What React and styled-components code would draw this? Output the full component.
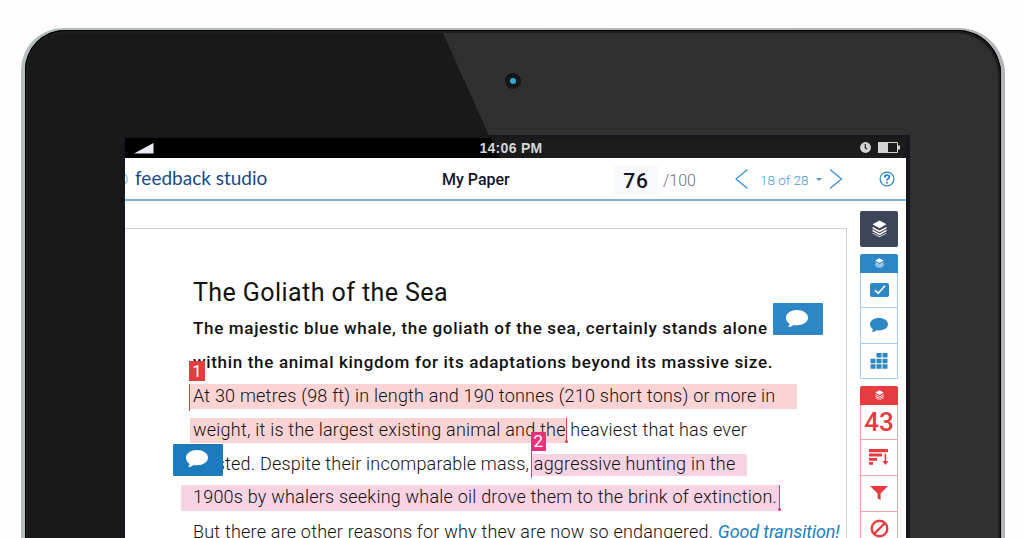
import React from 'react';
import styled, { createGlobalStyle, ThemeProvider } from 'styled-components';

const theme = {
  colors: {
    blue: '#2d87c5',
    sky: '#4a9bd6',
    line: '#7ab2db',
    red: '#e63c3f',
    pink: '#ec2f7b',
    navy: '#14142b',
    slate: '#3d4558',
    roseMark: '#fad4d4',
    pinkMark: '#f8d3e4',
  },
  fonts: {
    body: "Roboto, 'Liberation Sans', sans-serif",
    brand: "Lato, 'Open Sans', sans-serif",
    status: "'Liberation Sans', Arial, sans-serif",
  },
};

const GlobalStyle = createGlobalStyle`
  * {
    box-sizing: border-box;
  }

  body {
    margin: 0;
    background: #fff;
    overflow: hidden;
  }
`;

const Page = styled.div`
  height: 538px;
  padding: 28px 19px 0 21px;
  overflow: hidden;
  background: #fefefe;
  font-family: ${({ theme }) => theme.fonts.body};
`;

const Shell = styled.div`
  height: 620px;
  padding: 2px 4px 0 4px;
  border-radius: 42px 46px 0 0;
  background: linear-gradient(90deg, #b4bcbd 0%, #b4b8b9 60%, #b5b2b8 100%);
`;

const Bezel = styled.div`
  position: relative;
  height: 100%;
  padding: 105px 91px 0 96px;
  border-radius: 40px 44px 0 0;
  background: #191919;
  box-shadow: inset 0 0 0 1px #000, inset 0 0 0 3px #1d1f1e;
  overflow: hidden;
`;

const Glare = styled.div`
  position: absolute;
  inset: 3px 3px 0 3px;
  border-radius: 38px 42px 0 0;
  background: #303030;
  clip-path: polygon(415px 0, 100% 0, 100% 100%, 690px 100%);
`;

const Camera = styled.div`
  position: absolute;
  top: 43px;
  left: 480px;
  width: 16px;
  height: 16px;
  border: 5px solid #161616;
  border-radius: 50%;
  background: #2ba9cf;
`;

const Screen = styled.div`
  position: relative;
  height: 480px;
  border: solid #17171d;
  border-width: 3px 4px 0 4px;
  background: #fff;
`;

const StatusBar = styled.div`
  display: grid;
  grid-template-columns: 1fr auto 1fr;
  align-items: center;
  height: 20px;
  padding: 0 6px 1px 9px;
  background: linear-gradient(66deg, #000 0, #000 47.4%, #1b1b1b 47.5%);
  color: #d6d6d6;
  font: bold 14px ${({ theme }) => theme.fonts.status};
`;

const Clock = styled.span`
  letter-spacing: 0.3px;
  padding-right: 12px;
`;

const StatusIcons = styled.div`
  display: flex;
  align-items: center;
  justify-content: flex-end;
  gap: 7px;
`;

const Header = styled.header`
  display: grid;
  grid-template-columns: 10px 307px 172px 44px 77px 25px 69px 14px 36px 16px;
  align-items: center;
  height: 43px;
  border-bottom: 2px solid ${({ theme }) => theme.colors.line};
  white-space: nowrap;
`;

const Brand = styled.span`
  padding-bottom: 2px;
  color: #17498a;
  font-family: ${({ theme }) => theme.fonts.brand};
  font-size: 19px;
`;

const PaperTitle = styled.h1`
  margin: 2px 0 0;
  color: ${({ theme }) => theme.colors.navy};
  font-size: 16px;
  font-weight: 500;
`;

const Score = styled.span`
  height: 30px;
  margin-top: 2px;
  border-radius: 2px;
  background: #f8f9fa;
  color: ${({ theme }) => theme.colors.navy};
  font-size: 21px;
  font-weight: 500;
  letter-spacing: 0.8px;
  line-height: 32px;
  text-align: center;
`;

const ScoreTotal = styled.span`
  padding: 4px 0 0 5px;
  color: #6c6f7a;
  font-size: 16px;
  font-weight: 300;
`;

const PageCount = styled.span`
  display: flex;
  align-items: center;
  gap: 7px;
  padding-top: 2px;
  color: ${({ theme }) => theme.colors.sky};
  font-size: 13.5px;
  font-weight: 300;
`;

const Caret = styled.i`
  border: 3px solid transparent;
  border-top: 3px solid ${({ theme }) => theme.colors.sky};
  border-bottom: 0;
`;

const Workspace = styled.div`
  display: flex;
  align-items: flex-start;
`;

const Document = styled.article`
  flex: none;
  width: 722px;
  height: 400px;
  margin-top: 27px;
  padding: 45px 0 0 68px;
  border: solid #cfcfcf;
  border-width: 1px 1px 0 0;
`;

const Heading = styled.h2`
  margin: 0;
  color: #111;
  font-size: 25px;
  font-weight: 400;
  line-height: 37px;
  letter-spacing: 0.43px;
`;

const Line = styled.div`
  position: relative;
  display: flex;
  align-items: center;
  height: 33.9px;
  color: #111;
  font-size: ${({ $bold }) => ($bold ? '17px' : '18px')};
  font-weight: ${({ $bold }) => ($bold ? 500 : 300)};
  letter-spacing: ${({ $spacing }) => $spacing}px;
  white-space: pre;
`;

/* the tint hangs one pixel below the text's own centre */
const Mark = styled.mark`
  position: relative;
  height: ${({ $height }) => $height}px;
  margin: 2px ${({ $right }) => -$right}px 0 ${({ $left }) => -$left}px;
  padding: 0 ${({ $right }) => $right}px 0 ${({ $left }) => $left}px;
  background: ${({ theme, $tone }) => theme.colors[$tone]};
  color: inherit;
  line-height: ${({ $height }) => $height - 2}px;
`;

const StartPin = styled.span`
  position: absolute;
  bottom: -2px;
  left: -1px;
  width: 1px;
  height: 27px;
  background: ${({ theme, $tone }) => theme.colors[$tone]};
`;

const EndPin = styled.span`
  position: absolute;
  top: 0;
  right: 0;
  bottom: 0;
  width: 1px;
  background: ${({ theme, $tone }) => theme.colors[$tone]};

  &::after {
    content: '';
    position: absolute;
    bottom: 0;
    left: -1px;
    width: 3px;
    height: 3px;
    border-radius: 50%;
    background: inherit;
  }
`;

const Flag = styled.span`
  position: absolute;
  z-index: 1;
  bottom: calc(100% + ${({ $lift }) => $lift}px);
  left: -1px;
  width: ${({ $width }) => $width}px;
  height: ${({ $height }) => $height}px;
  background: ${({ theme, $tone }) => theme.colors[$tone]};
  color: #fff;
  font-size: 17px;
  font-weight: 400;
  letter-spacing: 0;
  line-height: ${({ $height }) => $height}px;
  text-align: center;
`;

const CommentBubble = styled.span`
  position: absolute;
  z-index: 1;
  top: ${({ $top }) => $top}px;
  left: ${({ $left }) => $left}px;
  display: flex;
  align-items: center;
  justify-content: center;
  width: 50px;
  height: 32px;
  padding: 0 2px 1px 0;
  border-radius: 1px;
  background: ${({ $color }) => $color};
`;

const Remark = styled.em`
  color: #1b7fc0;
  font-weight: 400;
  letter-spacing: ${({ $spacing }) => $spacing}px;
`;

const Toolbar = styled.aside`
  display: flex;
  flex: none;
  flex-direction: column;
  gap: 6.5px;
  width: 38px;
  margin: 10px 0 0 13px;
`;

const LayersButton = styled.button`
  display: flex;
  align-items: center;
  justify-content: center;
  height: 36px;
  padding: 0;
  border: 0;
  border-radius: 2px;
  background: ${({ theme }) => theme.colors.slate};
`;

const ToolGroup = styled.div`
  display: flex;
  flex-direction: column;
  border-radius: 2px;
  overflow: hidden;
`;

const GroupHeader = styled.div`
  display: flex;
  align-items: center;
  justify-content: center;
  height: 19px;
  background: ${({ theme, $tone }) => theme.colors[$tone]};
`;

const Tool = styled.div`
  display: flex;
  align-items: center;
  justify-content: center;
  height: 35.6px;
  border: 1px solid ${({ $border }) => $border};
  border-top: 0;
  color: ${({ theme, $tone }) => theme.colors[$tone]};
  font-size: 26px;
  font-weight: 500;
`;

const LayersIcon = ({ size }) => (
  <svg width={size} height={size * 1.15} viewBox="0 0 14 16" fill="none" stroke="#fff" strokeWidth="1.4">
    <path d="M7 .5 13.5 4 7 7.6.5 4Z" fill="#fff" stroke="none" />
    <path d="M.5 7 7 10.6 13.5 7M.5 9.7 7 13.3 13.5 9.7" />
    <path d="M.5 12.2 7 15.6 13.5 12.2" strokeWidth="1" opacity=".75" />
  </svg>
);

const Bubble = ({ width, fill }) => (
  <svg width={width} height={width * 0.78} viewBox="0 0 22 17" fill={fill}>
    <path d="M11 0C17 0 22 3.3 22 7.6s-5 7.5-11 7.5c-1.1 0-2.2-.1-3.2-.3C6.3 16 4.2 16.8 2 17c.9-.9 1.5-2 1.6-3.3C1.4 12.3 0 10 0 7.6 0 3.3 5 0 11 0Z" />
  </svg>
);

const Arrow = ({ flip }) => (
  <svg width="14" height="20" viewBox="0 0 14 20" fill="none" stroke="#2f8fd3" strokeWidth="1.2">
    <path d={flip ? 'M1 .5 12.5 10 1 19.5' : 'M12.5 .5 1 10 12.5 19.5'} />
  </svg>
);

const SignalIcon = () => (
  <svg width="20" height="12" viewBox="0 0 20 12">
    <path d="M0 11.5 19.5 1V11.5Z" fill="#e9edf3" />
  </svg>
);

const AlarmIcon = () => (
  <svg width="11" height="11" viewBox="0 0 11 11">
    <circle cx="5.5" cy="5.5" r="5.4" fill="#d4d4d4" />
    <path d="M5.3 2v3.7l1.7 1.5" fill="none" stroke="#1b1b1b" strokeWidth="1.2" />
  </svg>
);

const BatteryIcon = () => (
  <svg width="22" height="11" viewBox="0 0 22 11">
    <path d="M.5.5h19v10H.5Z" fill="none" stroke="#d4d4d4" />
    <path d="M0 0h10v11H0ZM20 3.5h2v4h-2Z" fill="#d4d4d4" />
  </svg>
);

const HelpIcon = () => (
  <svg width="16" height="16" viewBox="0 0 16 16" fill="none" stroke="#2385cf">
    <circle cx="8" cy="8" r="6.9" strokeWidth="1.2" />
    <path d="M5.7 6.5c0-1.5 1-2.4 2.3-2.4s2.3.8 2.3 2c0 1.6-2.3 1.7-2.3 3.4M8 10.7v1.7" strokeWidth="1.7" />
  </svg>
);

const CheckIcon = () => (
  <svg width="19" height="14" viewBox="0 0 19 14">
    <rect width="19" height="14" rx="2" fill="#2d87c5" />
    <path d="M5 7.2 8.2 10.3 15 2.8" fill="none" stroke="#fff" strokeWidth="1.6" />
  </svg>
);

const GridIcon = () => (
  <svg width="18" height="16" viewBox="0 0 18 16" fill="#2d87c5">
    <path d="M6.5 0h5v4.5h-5ZM12.5 0h5v4.5h-5ZM.5 5.7h5v4.5h-5ZM6.5 5.7h5v4.5h-5ZM12.5 5.7h5v4.5h-5ZM.5 11.3h5v4.5h-5ZM6.5 11.3h5v4.5h-5ZM12.5 11.3h5v4.5h-5Z" />
  </svg>
);

const SortIcon = () => (
  <svg width="20" height="17" viewBox="0 0 20 17" fill="#e63c3f">
    <path d="M0 0h19v3.2H0ZM0 4.5h13v3H0ZM0 9h8v2.7H0ZM0 13h4v2.7H0Z" />
    <path d="M15.6 4.5h1.5v7.5h2.3l-3 4-3-4h2.2Z" />
  </svg>
);

const FilterIcon = () => (
  <svg width="18" height="14" viewBox="0 0 18 14" fill="#e63c3f">
    <path d="M0 0h18L10.6 7.5V14L7.6 12.6V7.5Z" />
  </svg>
);

const BlockIcon = () => (
  <svg width="19" height="19" viewBox="0 0 19 19" fill="none" stroke="#e63c3f" strokeWidth="2.4">
    <circle cx="9.5" cy="9.5" r="7.8" />
    <path d="M4 15 15 4" />
  </svg>
);

const LogoEdge = () => (
  <svg width="4" height="12" viewBox="0 0 4 12" fill="none" stroke="#7fc0e6" strokeWidth="1.3">
    <path d="M0 1.5C3 3 3 8 0 10.5" />
  </svg>
);

const blueTools = [
  { id: 'check', icon: <CheckIcon /> },
  { id: 'comment', icon: <Bubble width={18} fill="#2d87c5" /> },
  { id: 'rubric', icon: <GridIcon /> },
];

const redTools = [
  { id: 'similarity', icon: '43' },
  { id: 'sort', icon: <SortIcon /> },
  { id: 'filter', icon: <FilterIcon /> },
  { id: 'exclude', icon: <BlockIcon /> },
];

const Paper = () => (
  <Document>
    <Heading>The Goliath of the Sea</Heading>
    <Line $bold $spacing={0.67}>
      The majestic blue whale, the goliath of the sea, certainly stands alone
      <CommentBubble $top={-8} $left={580} $color="#2d87c5">
        <Bubble width={22} fill="#fff" />
      </CommentBubble>
    </Line>
    <Line $bold $spacing={0.67}>within the animal kingdom for its adaptations beyond its massive size.</Line>
    <Line $spacing={0.215}>
      <Mark $tone="roseMark" $height={25} $left={3} $right={22}>
        At 30 metres (98 ft) in length and 190 tonnes (210 short tons) or more in
        <StartPin $tone="red" />
        <Flag $tone="red" $lift={3} $width={16} $height={20}>1</Flag>
      </Mark>
    </Line>
    <Line $spacing={0.225}>
      <Mark $tone="roseMark" $height={25} $left={3} $right={1}>
        weight, it is the largest existing animal and the
        <EndPin $tone="red" />
      </Mark>
      {' heaviest that has ever'}
    </Line>
    <Line $spacing={0.21}>
      {'existed. Despite their incomparable mass, '}
      <Mark $tone="pinkMark" $height={22} $left={2} $right={12}>
        aggressive hunting in the
        <StartPin $tone="pink" />
        <Flag $tone="pink" $lift={3} $width={15} $height={19}>2</Flag>
      </Mark>
      <CommentBubble $top={-3} $left={-20} $color="#1b7bbd">
        <Bubble width={22} fill="#fff" />
      </CommentBubble>
    </Line>
    <Line $spacing={0.215}>
      <Mark $tone="pinkMark" $height={26} $left={12} $right={3}>
        1900s by whalers seeking whale oil drove them to the brink of extinction.
        <EndPin $tone="pink" />
      </Mark>
    </Line>
    <Line $spacing={0.21}>
      {'But there are other reasons for why they are now so endangered. '}
      <Remark $spacing={-0.12}>Good transition!</Remark>
    </Line>
  </Document>
);

const App = () => {
  return (
    <ThemeProvider theme={theme}>
      <GlobalStyle />
      <Page>
        <Shell>
          <Bezel>
            <Glare />
            <Camera />
            <Screen>
              <StatusBar>
                <SignalIcon />
                <Clock>14:06 PM</Clock>
                <StatusIcons>
                  <AlarmIcon />
                  <BatteryIcon />
                </StatusIcons>
              </StatusBar>
              <Header>
                <LogoEdge />
                <Brand>feedback studio</Brand>
                <PaperTitle>My Paper</PaperTitle>
                <Score>76</Score>
                <ScoreTotal>/100</ScoreTotal>
                <Arrow />
                <PageCount>
                  18 of 28
                  <Caret />
                </PageCount>
                <Arrow flip />
                <span />
                <HelpIcon />
              </Header>
              <Workspace>
                <Paper />
                <Toolbar>
                  <LayersButton aria-label="All layers">
                    <LayersIcon size={15} />
                  </LayersButton>
                  <ToolGroup>
                    <GroupHeader $tone="blue">
                      <LayersIcon size={9} />
                    </GroupHeader>
                    {blueTools.map((tool) => (
                      <Tool key={tool.id} $tone="blue" $border="#a4cdec">
                        {tool.icon}
                      </Tool>
                    ))}
                  </ToolGroup>
                  <ToolGroup>
                    <GroupHeader $tone="red">
                      <LayersIcon size={9} />
                    </GroupHeader>
                    {redTools.map((tool) => (
                      <Tool key={tool.id} $tone="red" $border="#f5a3a6">
                        {tool.icon}
                      </Tool>
                    ))}
                  </ToolGroup>
                </Toolbar>
              </Workspace>
            </Screen>
          </Bezel>
        </Shell>
      </Page>
    </ThemeProvider>
  );
};

export default App;
